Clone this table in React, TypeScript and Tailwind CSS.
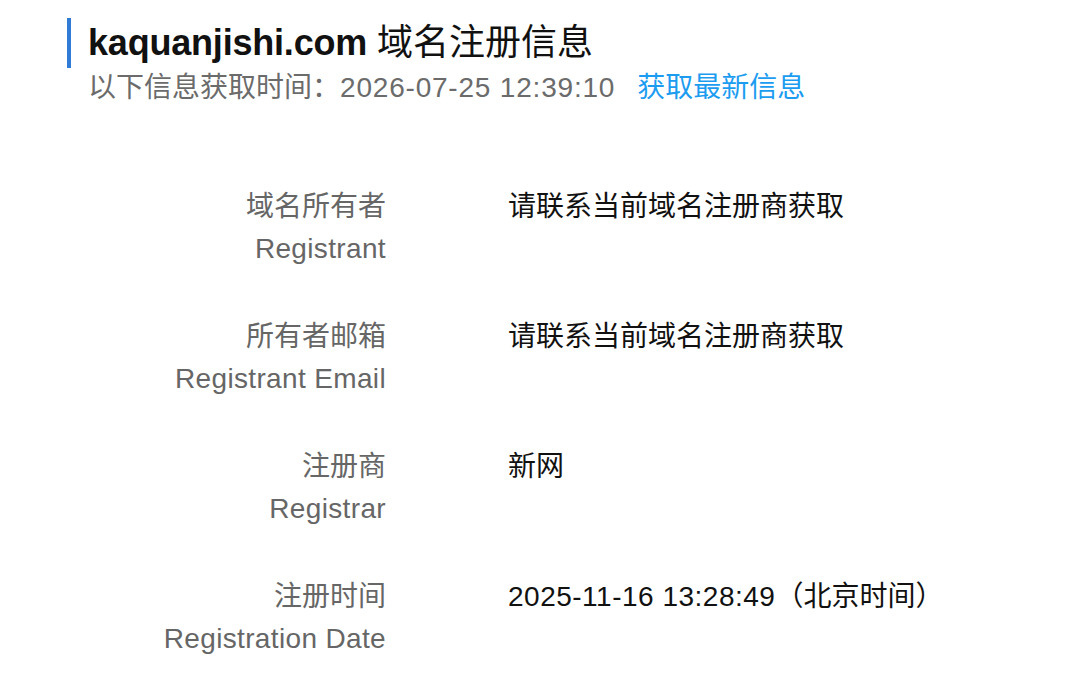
const rows = [
  { zh: "域名所有者", en: "Registrant", value: "请联系当前域名注册商获取", latin: false },
  { zh: "所有者邮箱", en: "Registrant Email", value: "请联系当前域名注册商获取", latin: false },
  { zh: "注册商", en: "Registrar", value: "新网", latin: false },
  { zh: "注册时间", en: "Registration Date", value: "2025-11-16 13:28:49", latin: true }
];

export default function App() {
  return (
    <div
      className="min-h-[692px] w-[1088px] bg-white"
      style={{ fontFamily: '"Liberation Sans", "Noto Sans CJK SC", sans-serif' }}
    >
      <div className="pl-[67px] pt-[18px]">
        <h1 className="border-l-[4px] border-[#2f7bd6] pl-[17px] text-[36px] leading-[50px] text-[#111]">
          <span className="font-bold tracking-[-0.2px]">kaquanjishi.com</span> <span className="font-normal">域名注册信息</span>
        </h1>
        <p className="pl-[21px] text-[28px] leading-[40px] text-[#6b6b6b]">
          以下信息获取时间：<span className="tracking-[0.8px]">2026-07-25 12:39:10</span>
          <a className="ml-[22px] text-[#1c9cf0]" href="#">获取最新信息</a>
        </p>
      </div>

      <div className="mt-[78px] flex flex-col gap-[46px]">
        {rows.map((r) => (
          <div key={r.en} className="flex text-[28px] leading-[42px]">
            <div className="w-[386px] shrink-0 text-right text-[#666]">
              <div>{r.zh}</div>
              <div className="tracking-[0.35px]">{r.en}</div>
            </div>
            <div className="ml-[122px] text-[#111]">
              {r.latin ? (
                <>
                  <span className="tracking-[0.5px]">{r.value}</span>（北京时间）
                </>
              ) : (
                r.value
              )}
            </div>
          </div>
        ))}
      </div>
    </div>
  );
}
